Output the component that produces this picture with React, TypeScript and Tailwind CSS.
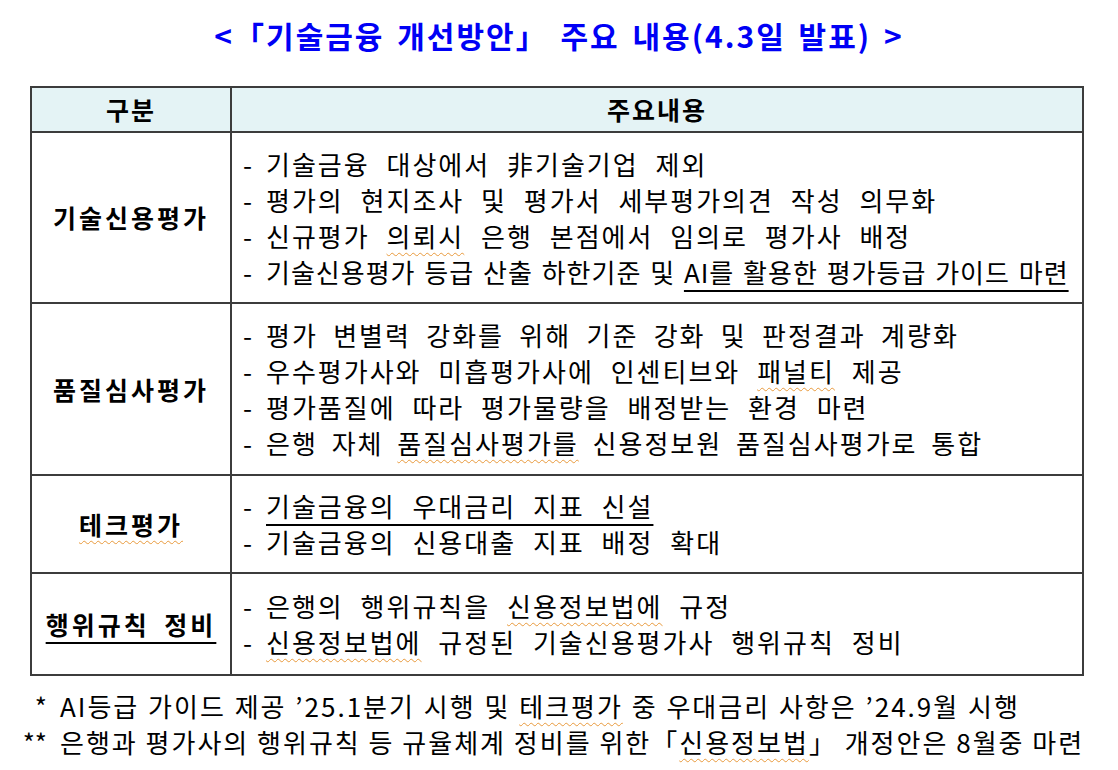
import React from "react";

const wavy = "underline decoration-wavy decoration-[#e89a3c] decoration-1 underline-offset-[5px]";
const solid = "underline decoration-[1.5px] underline-offset-[7px]";

function Line({ children, cls }: { children: React.ReactNode; cls?: string }) {
  return (
    <div className="flex h-[36px] items-center whitespace-nowrap">
      <span className="w-[23px] shrink-0">-</span>
      <span className={cls ?? "tracking-[2px] [word-spacing:9px]"}>{children}</span>
    </div>
  );
}

function Row({
  label,
  h,
  children,
  last,
}: {
  label: React.ReactNode;
  h: string;
  children: React.ReactNode;
  last?: boolean;
}) {
  return (
    <div className={`grid grid-cols-[200px_1fr] ${h} ${last ? "" : "border-b-2 border-[#3c3c3c]"}`}>
      <div className="flex items-center justify-center border-r-2 border-[#3c3c3c] font-bold text-[25px] tracking-[3px] [word-spacing:6px]">
        {label}
      </div>
      <div className="flex flex-col justify-center pl-[11px]">{children}</div>
    </div>
  );
}

export default function App() {
  return (
    <div className="w-[1118px] h-[770px] bg-white text-black font-['Noto_Sans_CJK_KR','Noto_Sans',sans-serif] text-[26px] leading-none">
      <div className="flex h-[70px] items-center justify-center text-[30px] font-bold text-[#0000f5] whitespace-nowrap tracking-[2px] [word-spacing:4px]">
        &lt;「기술금융 개선방안」 주요 내용(4.3일 발표) &gt;
      </div>
      <div className="ml-[30px] mt-[16px] w-[1054px] border-2 border-[#3c3c3c]">
        <div className="grid h-[45px] grid-cols-[200px_1fr] border-b-2 border-[#3c3c3c] bg-[#e4f3f5] font-bold text-[25px] tracking-[2px]">
          <div className="flex items-center justify-center border-r-2 border-[#3c3c3c]">구분</div>
          <div className="flex items-center justify-center">주요내용</div>
        </div>
        <Row label="기술신용평가" h="h-[171px]">
          <Line>기술금융 대상에서 非기술기업 제외</Line>
          <Line>평가의 현지조사 및 평가서 세부평가의견 작성 의무화</Line>
          <Line>
            신규평가 <span className={wavy}>의뢰시</span> 은행 본점에서 임의로 평가사 배정
          </Line>
          <Line cls="tracking-[1px] [word-spacing:2px]">
            기술신용평가 등급 산출 하한기준 및 <span className={solid}>AI를 활용한 평가등급 가이드 마련</span>
          </Line>
        </Row>
        <Row label="품질심사평가" h="h-[172px]">
          <Line cls="tracking-[2px] [word-spacing:7.5px]">평가 변별력 강화를 위해 기준 강화 및 판정결과 계량화</Line>
          <Line>
            우수평가사와 미흡평가사에 인센티브와 <span className={wavy}>패널티</span> 제공
          </Line>
          <Line>평가품질에 따라 평가물량을 배정받는 환경 마련</Line>
          <Line cls="tracking-[2px] [word-spacing:6px]">
            은행 자체 <span className={wavy}>품질심사평가를</span> 신용정보원 품질심사평가로 통합
          </Line>
        </Row>
        <Row label={<span className={wavy}>테크평가</span>} h="h-[98px]">
          <Line>
            <span className={solid}>기술금융의 우대금리 지표 신설</span>
          </Line>
          <Line>기술금융의 신용대출 지표 배정 확대</Line>
        </Row>
        <Row label={<span className={solid}>행위규칙 정비</span>} h="h-[100px]" last>
          <Line>
            은행의 행위규칙을 <span className={wavy}>신용정보법에</span> 규정
          </Line>
          <Line>
            <span className={wavy}>신용정보법에</span> 규정된 기술신용평가사 행위규칙 정비
          </Line>
        </Row>
      </div>
      <div className="mt-[12px] flex flex-col">
        <div className="flex h-[36px] items-center whitespace-nowrap">
          <span className="w-[47px] text-right">*</span>
          <span className="pl-[13px] tracking-[2px] [word-spacing:1px]">
            AI등급 가이드 제공 ’25.1분기 시행 및 <span className={wavy}>테크평가</span> 중 우대금리 사항은 ’24.9월 시행
          </span>
        </div>
        <div className="flex h-[36px] items-center whitespace-nowrap">
          <span className="w-[47px] text-right">**</span>
          <span className="pl-[13px] tracking-[2px] [word-spacing:0px]">
            은행과 평가사의 행위규칙 등 규율체계 정비를 위한「<span className={wavy}>신용정보법</span>」 개정안은 8월중 마련
          </span>
        </div>
      </div>
    </div>
  );
}
